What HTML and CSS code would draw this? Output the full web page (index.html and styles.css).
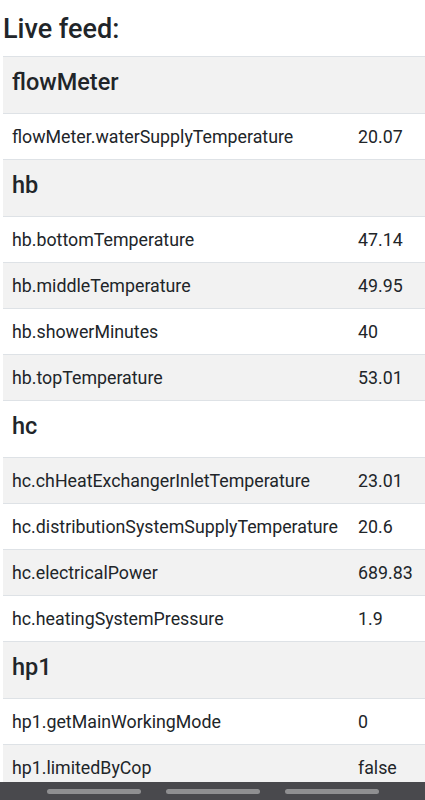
FILE: index.html
```html
<!DOCTYPE html>
<html lang="en">
<head>
  <meta charset="UTF-8" />
  <meta name="viewport" content="width=device-width, initial-scale=1.0"/>
  <title>Live feed</title>
  <link rel="stylesheet" href="styles.css">
</head>
<body>

  <!-- Live feed -->
  <div class="feed">
    <h2 class="feed-title">Live feed:</h2>
    <table class="feed-table">
      <tbody>
        <tr class="group-row"><td colspan="2"><h4>flowMeter</h4></td></tr>
        <tr><td class="key">flowMeter.waterSupplyTemperature</td><td class="value">20.07</td></tr>

        <tr class="group-row"><td colspan="2"><h4>hb</h4></td></tr>
        <tr><td class="key">hb.bottomTemperature</td><td class="value">47.14</td></tr>
        <tr><td class="key">hb.middleTemperature</td><td class="value">49.95</td></tr>
        <tr><td class="key">hb.showerMinutes</td><td class="value">40</td></tr>
        <tr><td class="key">hb.topTemperature</td><td class="value">53.01</td></tr>

        <tr class="group-row"><td colspan="2"><h4>hc</h4></td></tr>
        <tr><td class="key">hc.chHeatExchangerInletTemperature</td><td class="value">23.01</td></tr>
        <tr><td class="key">hc.distributionSystemSupplyTemperature</td><td class="value">20.6</td></tr>
        <tr><td class="key">hc.electricalPower</td><td class="value">689.83</td></tr>
        <tr><td class="key">hc.heatingSystemPressure</td><td class="value">1.9</td></tr>

        <tr class="group-row"><td colspan="2"><h4>hp1</h4></td></tr>
        <tr><td class="key">hp1.getMainWorkingMode</td><td class="value">0</td></tr>
        <tr><td class="key">hp1.limitedByCop</td><td class="value">false</td></tr>
      </tbody>
    </table>
  </div>

  <!-- Android style nav bar -->
  <div class="nav-bar">
    <span class="nav-pill"></span>
    <span class="nav-pill"></span>
    <span class="nav-pill"></span>
  </div>

</body>
</html>
```

FILE: styles.css
```css
body {
  margin: 0;
  font-family: Roboto, "Liberation Sans", Arial, sans-serif;
  color: #212529;
  background: #fff;
  height: 800px;
  overflow: hidden;
}

.feed {
  padding-left: 3px;
}

.feed-title {
  font-size: 27px;
  font-weight: 500;
  line-height: 32px;
  margin: 0;
  padding: 13px 0 11px;
}

.feed-table {
  width: 422px;
  border-collapse: collapse;
  font-size: 17.8px;
  line-height: 24px;
}

.feed-table td {
  border-top: 1px solid #dee2e6;
  padding: 11px 9px 10px;
  vertical-align: top;
  white-space: nowrap;
}

.feed-table tr:nth-child(odd) {
  background-color: #f2f2f2;
}

.feed-table .key {
  width: 330px;
}

.feed-table .value {
  padding-left: 7px;
}

.group-row td {
  padding: 13px 9px 18px;
}

.group-row h4 {
  margin: 0;
  font-size: 23.5px;
  font-weight: 500;
  line-height: 25px;
}

.nav-bar {
  position: fixed;
  left: 0;
  bottom: 0;
  width: 100%;
  height: 18px;
  background: #49494d;
  display: flex;
  justify-content: center;
  align-items: center;
  gap: 25px;
}

.nav-pill {
  width: 94px;
  height: 5px;
  border-radius: 3px;
  background: #8f8f91;
}
```
